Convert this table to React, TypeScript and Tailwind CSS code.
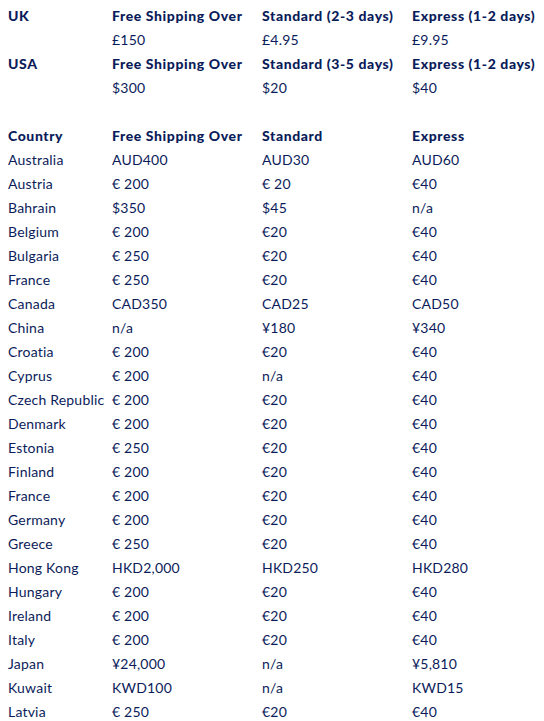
const ink = 'text-[#0b1c5a]';

const summary = [
    {label: 'UK', std: 'Standard (2-3 days)', exp: 'Express (1-2 days)', free: '£150', stdPrice: '£4.95', expPrice: '£9.95'},
    {label: 'USA', std: 'Standard (3-5 days)', exp: 'Express (1-2 days)', free: '$300', stdPrice: '$20', expPrice: '$40'},
];

const rows: [string, string, string, string][] = [
    ['Australia', 'AUD400', 'AUD30', 'AUD60'],
    ['Austria', '€ 200', '€ 20', '€40'],
    ['Bahrain', '$350', '$45', 'n/a'],
    ['Belgium', '€ 200', '€20', '€40'],
    ['Bulgaria', '€ 250', '€20', '€40'],
    ['France', '€ 250', '€20', '€40'],
    ['Canada', 'CAD350', 'CAD25', 'CAD50'],
    ['China', 'n/a', '¥180', '¥340'],
    ['Croatia', '€ 200', '€20', '€40'],
    ['Cyprus', '€ 200', 'n/a', '€40'],
    ['Czech Republic', '€ 200', '€20', '€40'],
    ['Denmark', '€ 200', '€20', '€40'],
    ['Estonia', '€ 250', '€20', '€40'],
    ['Finland', '€ 200', '€20', '€40'],
    ['France', '€ 200', '€20', '€40'],
    ['Germany', '€ 200', '€20', '€40'],
    ['Greece', '€ 250', '€20', '€40'],
    ['Hong Kong', 'HKD2,000', 'HKD250', 'HKD280'],
    ['Hungary', '€ 200', '€20', '€40'],
    ['Ireland', '€ 200', '€20', '€40'],
    ['Italy', '€ 200', '€20', '€40'],
    ['Japan', '¥24,000', 'n/a', '¥5,810'],
    ['Kuwait', 'KWD100', 'n/a', 'KWD15'],
    ['Latvia', '€ 250', '€20', '€40'],
];

const grid = 'grid grid-cols-[104px_150px_150px_1fr] h-6 items-center whitespace-nowrap';
const head = 'font-black tracking-[0.6px]';

function App() {
    return (
        <div className={`h-[721px] overflow-hidden bg-white px-2 pt-[3px] text-[14px] ${ink} font-['Lato','Liberation_Sans',sans-serif] tracking-[0.2px]`}>
            {summary.map((s) => (
                <div key={s.label}>
                    <div className={`${grid} ${head}`}>
                        <span>{s.label}</span>
                        <span>Free Shipping Over</span>
                        <span>{s.std}</span>
                        <span>{s.exp}</span>
                    </div>
                    <div className={grid}>
                        <span></span>
                        <span>{s.free}</span>
                        <span>{s.stdPrice}</span>
                        <span>{s.expPrice}</span>
                    </div>
                </div>
            ))}

            <div className="h-6" />

            <div className={`${grid} ${head}`}>
                <span>Country</span>
                <span>Free Shipping Over</span>
                <span>Standard</span>
                <span>Express</span>
            </div>
            {rows.map((r, i) => (
                <div key={i} className={grid}>
                    <span>{r[0]}</span>
                    <span>{r[1]}</span>
                    <span>{r[2]}</span>
                    <span>{r[3]}</span>
                </div>
            ))}
        </div>
    );
}

export default App;
